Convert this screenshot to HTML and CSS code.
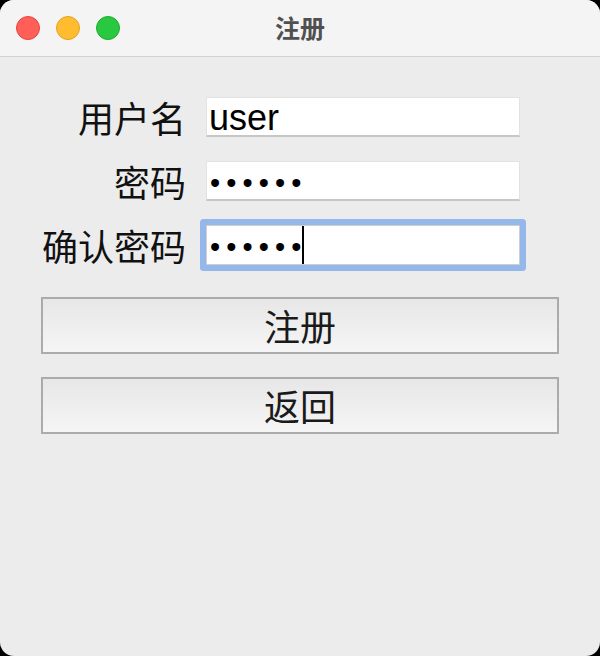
FILE: index.html
```html
<!DOCTYPE html>
<html lang="zh-CN">
<head>
<meta charset="utf-8">
<title>注册</title>
<link rel="stylesheet" href="styles.css">
</head>
<body>
<div class="window">
  <header class="titlebar">
    <div class="lights">
      <span class="light red"></span>
      <span class="light yellow"></span>
      <span class="light green"></span>
    </div>
    <div class="title">注册</div>
  </header>
  <main class="content">
    <div class="form">
      <label class="label">用户名</label>
      <div class="field"><span class="value">user</span></div>
      <label class="label">密码</label>
      <div class="field"><span class="dots">••••••</span></div>
      <label class="label">确认密码</label>
      <div class="field focused"><span class="dots">••••••</span><span class="caret"></span></div>
    </div>
    <div class="buttons">
      <button class="btn">注册</button>
      <button class="btn">返回</button>
    </div>
  </main>
</div>
</body>
</html>
```
FILE: styles.css
```css
html, body {
  margin: 0;
  padding: 0;
  background: #000;
}
.window {
  width: 600px;
  height: 656px;
  background: #ececec;
  border-radius: 14px;
  overflow: hidden;
  font-family: "Noto Sans CJK SC", "Noto Sans", sans-serif;
}
.titlebar {
  height: 56px;
  background: #f4f4f4;
  border-bottom: 1px solid #d2d2d2;
  display: flex;
  align-items: center;
  position: relative;
}
.lights {
  display: flex;
  gap: 16px;
  padding-left: 16px;
}
.light {
  width: 22px;
  height: 22px;
  border-radius: 50%;
  border: 1px solid transparent;
}
.red { background: #ff5f57; border-color: #e2463f; }
.yellow { background: #febc2e; border-color: #e1a325; }
.green { background: #28c840; border-color: #1eaa31; }
.title {
  position: absolute;
  left: 0;
  right: 0;
  top: 0;
  height: 56px;
  line-height: 54px;
  text-align: center;
  font-size: 25px;
  font-weight: 600;
  color: #505050;
  pointer-events: none;
}
.content {
  padding-top: 40px;
}
.form {
  display: grid;
  grid-template-columns: 186px 314px;
  column-gap: 20px;
  row-gap: 24px;
  align-items: center;
}
.label {
  text-align: right;
  font-size: 36px;
  color: #111;
  line-height: 40px;
}
.field {
  height: 40px;
  box-sizing: border-box;
  background: #fff;
  border: 1px solid #e2e2e2;
  border-bottom: 2px solid #c6c6c6;
  display: flex;
  align-items: center;
  padding-left: 2px;
  position: relative;
}
.field.focused {
  border: 1px solid #cfcfcf;
  box-shadow: 0 0 0 6px #94b8ea;
  border-radius: 1px;
}
.value {
  font-family: "Liberation Sans", Arial, sans-serif;
  font-size: 36px;
  color: #000;
  line-height: 40px;
  margin-top: 2px;
}
.dots {
  font-family: "Liberation Sans", Arial, sans-serif;
  font-size: 29px;
  letter-spacing: 6.1px;
  color: #000;
  line-height: 40px;
  padding-left: 1px;
  margin-top: 4px;
  margin-right: -6px;
}
.caret {
  width: 2px;
  height: 38px;
  background: #000;
}
.buttons {
  margin: 32px 41px 0;
  display: flex;
  flex-direction: column;
  gap: 23px;
}
.btn {
  height: 57px;
  box-sizing: border-box;
  border: 2px solid #ababab;
  background: linear-gradient(#e7e7e7, #f5f5f5);
  font-family: "Noto Sans CJK SC", "Noto Sans", sans-serif;
  font-size: 36px;
  color: #1a1a1a;
  padding: 0;
  margin: 0;
  line-height: 53px;
}
```
